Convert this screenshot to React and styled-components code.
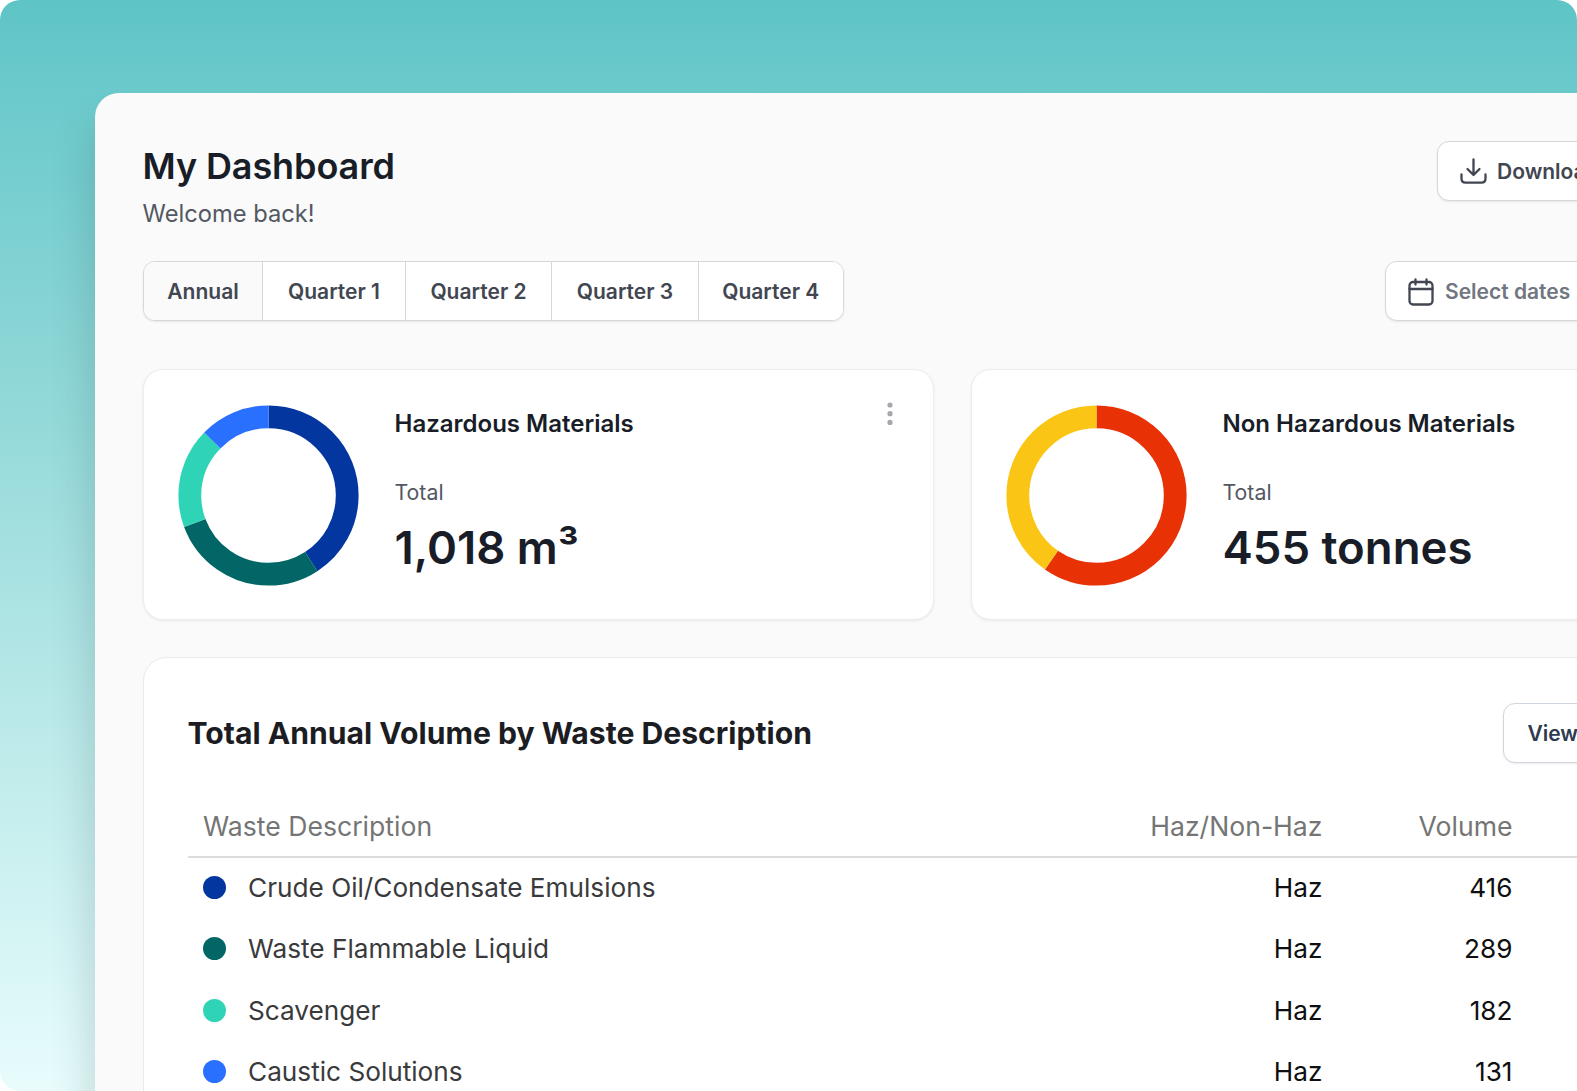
import React from "react";
import styled, { createGlobalStyle } from "styled-components";

const Global = createGlobalStyle`
  html, body { margin: 0; padding: 0; background: #fff; }
  body { font-family: Inter, "Noto Sans", sans-serif; overflow: hidden; }
`;

const Stage = styled.div`
  width: 1577px;
  height: 1091px;
  box-sizing: border-box;
  padding: 93px 0 0 95px;
  border-radius: 20px;
  overflow: hidden;
  background: linear-gradient(180deg, #5ec4c6 0%, #6ccacc 9%, #8ad5d5 31%, #b8e8e8 64%, #e8fcfc 100%);
`;

const Panel = styled.main`
  width: 1715px;
  min-height: 1200px;
  box-sizing: border-box;
  padding: 48px 48px 0 48px;
  background: #fafafa;
  border-radius: 24px 0 0 0;
  box-shadow: -8px 32px 36px rgba(30, 70, 75, 0.17);
`;

const HeaderRow = styled.header`
  display: flex;
  justify-content: space-between;
  align-items: flex-start;
`;

const Heading = styled.div`
  margin-left: -0.5px;
`;

const Title = styled.h1`
  margin: 0;
  font-size: 36px;
  line-height: 50px;
  font-weight: 600;
  letter-spacing: -0.1px;
  color: #181d27;
`;

const Subtitle = styled.p`
  margin: 7px 0 0;
  line-height: 32px;
  font-size: 23.7px;
  font-weight: 400;
  color: #535862;
`;

const Button = styled.button`
  display: flex;
  flex: none;
  align-items: center;
  gap: 10px;
  box-sizing: border-box;
  height: 60px;
  padding: 1px 22px 0;
  background: #fff;
  border: 1.5px solid #d5d7da;
  border-radius: 12px;
  box-shadow: 0 1px 2px rgba(10, 13, 18, 0.08);
  font: 600 21px/28px Inter, sans-serif;
  color: #414651;
  white-space: nowrap;
`;

const DownloadButton = styled(Button)`
  width: 325px;
`;

const ToolRow = styled.div`
  display: flex;
  justify-content: space-between;
  align-items: center;
  margin-top: 31px;
`;

const Tabs = styled.div`
  display: flex;
  height: 60px;
  box-sizing: border-box;
  background: #fff;
  border: 1.5px solid #d5d7da;
  border-radius: 12px;
  overflow: hidden;
  box-shadow: 0 1px 2px rgba(10, 13, 18, 0.08);
`;

const Tab = styled.div`
  display: flex;
  align-items: center;
  justify-content: center;
  box-sizing: border-box;
  width: ${(p) => p.$w}px;
  font-size: 21px;
  font-weight: 600;
  color: #414651;
  background: ${(p) => (p.$active ? "#fafafa" : "#fff")};
  & + & { border-left: 1.5px solid #d5d7da; }
`;

const DateButton = styled(Button)`
  width: 377px;
  gap: 11px;
  color: #717680;
`;

const Cards = styled.section`
  display: grid;
  grid-template-columns: 791px 791px;
  gap: 37px;
  margin-top: 48px;
`;

const Card = styled.article`
  position: relative;
  display: flex;
  gap: 35.5px;
  height: 251px;
  box-sizing: border-box;
  padding: 35px 34px;
  background: #fff;
  border: 1.5px solid #eceded;
  border-radius: 20px;
  box-shadow: 0 1px 3px rgba(10, 13, 18, 0.07);
`;

const CardBody = styled.div`
  display: flex;
  flex-direction: column;
`;

const CardTitle = styled.h2`
  margin: 3px 0 0;
  font-size: 24px;
  line-height: 32px;
  font-weight: 600;
  color: #181d27;
`;

const CardLabel = styled.div`
  margin-top: 38px;
  font-size: 21.3px;
  line-height: 28px;
  color: #535862;
`;

const CardValue = styled.div`
  margin-top: 12px;
  font-size: 45.5px;
  line-height: 60px;
  font-weight: 600;
  color: #181d27;
`;

const MenuDots = styled.svg`
  position: absolute;
  top: 31.5px;
  right: 40px;
`;

const TableCard = styled.section`
  margin-top: 37px;
  padding: 45px 43.5px 0;
  background: #fff;
  border: 1.5px solid #e9eaeb;
  border-radius: 24px 24px 0 0;
`;

const TableHead = styled.div`
  display: flex;
  justify-content: space-between;
  align-items: center;
  height: 60px;
`;

const TableTitle = styled.h2`
  margin: 0;
  font-size: 30.15px;
  line-height: 40px;
  font-weight: 700;
  color: #1c1d22;
`;

const ViewButton = styled(Button)`
  width: 215px;
  padding: 1px 24px 0;
  border-color: #cfd6e0;
  color: #2d3a4f;
`;

const Table = styled.div`
  margin-top: 23px;
`;

const Row = styled.div`
  display: grid;
  grid-template-columns: 1fr 180px 190px 205px;
  align-items: center;
  box-sizing: border-box;
  height: 61.5px;
  padding: 0 0 3px 15.5px;
  font-size: 26.2px;
  color: #0f0f10;
`;

const HeadRow = styled(Row)`
  height: 72px;
  padding-top: 10px;
  padding-bottom: 0;
  border-bottom: 2px solid #dcdcdc;
  font-size: 26.6px;
  color: #757575;
`;

const Desc = styled.div`
  display: flex;
  align-items: center;
  gap: 22px;
  color: #3a3a3c;
`;

const HeadDesc = styled.div`
  color: #757575;
`;

const Num = styled.div`
  text-align: right;
`;

const Dot = styled.span`
  width: 23px;
  height: 23px;
  border-radius: 50%;
  background: ${(p) => p.$c};
`;

const Donut = ({ segments }) => {
  const r = 78.7;
  const c = 2 * Math.PI * r;
  let acc = 0;
  return (
    <svg width="181" height="181" viewBox="0 0 181 181" style={{ flex: "none" }}>
      <g transform="rotate(-90 90.5 90.5)">
        {segments.map(([color, frac]) => {
          const el = (
            <circle
              key={color}
              cx="90.5"
              cy="90.5"
              r={r}
              fill="none"
              stroke={color}
              strokeWidth="22.8"
              strokeDasharray={`${frac * c} ${c}`}
              strokeDashoffset={-acc * c}
            />
          );
          acc += frac;
          return el;
        })}
      </g>
    </svg>
  );
};

const DownloadIcon = () => (
  <svg width="27" height="27" viewBox="0 0 27 27" fill="none" stroke="#414651" strokeWidth="2.3" strokeLinecap="round" strokeLinejoin="round">
    <path d="M13.5 1.5V17M7.5 11l6 6 6-6" />
    <path d="M1.5 16.5v4c0 2.5 1.6 4.2 4 4.2h16c2.4 0 4-1.7 4-4.2v-4" />
  </svg>
);

const CalendarIcon = () => (
  <svg width="26" height="28" viewBox="0 0 26 28" fill="none" stroke="#414651" strokeWidth="2.3" strokeLinecap="round" strokeLinejoin="round">
    <rect x="1.5" y="4" width="23" height="22.5" rx="3.5" />
    <path d="M1.5 11h23M7.5 1.5v5M18.5 1.5v5" />
  </svg>
);

const rows = [
  ["Crude Oil/Condensate Emulsions", "#03369f", "416"],
  ["Waste Flammable Liquid", "#026666", "289"],
  ["Scavenger", "#2fd4b6", "182"],
  ["Caustic Solutions", "#2a70ff", "131"],
];

export default function App() {
  return (
    <>
      <Global />
      <Stage>
        <Panel>
          <HeaderRow>
            <Heading>
              <Title>My Dashboard</Title>
              <Subtitle>Welcome back!</Subtitle>
            </Heading>
            <DownloadButton>
              <DownloadIcon />
              Download Report
            </DownloadButton>
          </HeaderRow>
          <ToolRow>
            <Tabs>
              <Tab $active $w={118}>Annual</Tab>
              <Tab $w={143}>Quarter 1</Tab>
              <Tab $w={146}>Quarter 2</Tab>
              <Tab $w={147}>Quarter 3</Tab>
              <Tab $w={144.5}>Quarter 4</Tab>
            </Tabs>
            <DateButton>
              <CalendarIcon />
              Select dates
            </DateButton>
          </ToolRow>
          <Cards>
            <Card>
              <Donut
                segments={[
                  ["#03369f", 0.408],
                  ["#026666", 0.284],
                  ["#2fd4b6", 0.18],
                  ["#2a70ff", 0.128],
                ]}
              />
              <CardBody>
                <CardTitle>Hazardous Materials</CardTitle>
                <CardLabel>Total</CardLabel>
                <CardValue>1,018 m³</CardValue>
              </CardBody>
              <MenuDots width="6" height="24" viewBox="0 0 6 24" fill="#a4a7ae">
                <circle cx="3" cy="3" r="2.6" />
                <circle cx="3" cy="11.7" r="2.6" />
                <circle cx="3" cy="20.4" r="2.6" />
              </MenuDots>
            </Card>
            <Card>
              <Donut
                segments={[
                  ["#e83104", 0.596],
                  ["#fbc515", 0.404],
                ]}
              />
              <CardBody>
                <CardTitle>Non Hazardous Materials</CardTitle>
                <CardLabel>Total</CardLabel>
                <CardValue>455 tonnes</CardValue>
              </CardBody>
            </Card>
          </Cards>
          <TableCard>
            <TableHead>
              <TableTitle>Total Annual Volume by Waste Description</TableTitle>
              <ViewButton>View all</ViewButton>
            </TableHead>
            <Table>
              <HeadRow>
                <HeadDesc>Waste Description</HeadDesc>
                <Num>Haz/Non-Haz</Num>
                <Num>Volume</Num>
                <div />
              </HeadRow>
              {rows.map(([name, color, vol]) => (
                <Row key={name}>
                  <Desc>
                    <Dot $c={color} />
                    {name}
                  </Desc>
                  <Num>Haz</Num>
                  <Num>{vol}</Num>
                  <div />
                </Row>
              ))}
            </Table>
          </TableCard>
        </Panel>
      </Stage>
    </>
  );
}
